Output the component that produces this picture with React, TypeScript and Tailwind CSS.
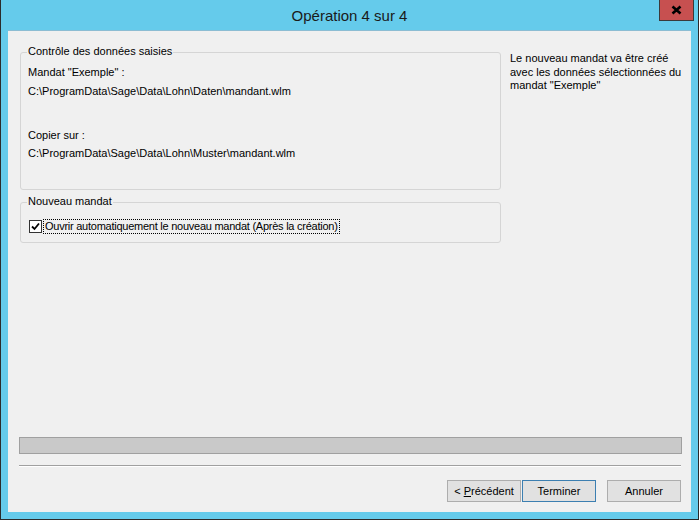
import React from "react";

const font = { fontFamily: '"Liberation Sans", Arial, sans-serif' };

function GroupBox({ label, className, children }: { label: string; className: string; children: React.ReactNode }) {
  return (
    <div className={`relative rounded-[3px] border border-[#d5d5d5] ${className}`}>
      <span className="absolute -top-[8px] left-[6px] bg-[#f0f0f0] px-[1px] leading-[13px]">{label}</span>
      {children}
    </div>
  );
}

function Button({ children, focused }: { children: React.ReactNode; focused?: boolean }) {
  return (
    <button
      className={`h-[22px] w-[74px] bg-[#e1e1e1] text-[11px] leading-[13px] text-black ${focused ? "border border-[#3c7fb1]" : "border border-[#adadad]"}`}
    >
      {children}
    </button>
  );
}

export default function App() {
  return (
    <div className="flex h-[520px] w-[699px] flex-col border-x border-b border-[#2b2b2b] bg-[#65cbeb] text-[11px] text-black" style={font}>
      {/* Title bar */}
      <div className="relative flex h-[30px] shrink-0 items-center justify-center">
        <span className="pt-[2px] text-[15px] text-[#1a1a1a]">Opération 4 sur 4</span>
        <div className="absolute right-[4px] top-0 flex h-[21px] w-[35px] items-center justify-center border border-t-0 border-[#3a3a3a] bg-[#c75050]">
          <svg width="11" height="10" viewBox="0 0 11 10">
            <path d="M1.5 1.5 L9.5 8.5 M9.5 1.5 L1.5 8.5" stroke="#000" strokeWidth="2.6" />
          </svg>
        </div>
      </div>

      {/* Content */}
      <div className="mx-[7px] mb-[7px] flex flex-1 flex-col border-t border-[#8cbdd3] bg-[#f0f0f0]">
        <div className="mt-[21px] flex">
          <div className="ml-[12px] w-[481px]">
            <GroupBox label="Contrôle des données saisies" className="h-[138px] pl-[7px] pt-[13px]">
              <p className="leading-[13px]">Mandat "Exemple" :</p>
              <p className="mt-[6px] leading-[13px]">C:\ProgramData\Sage\Data\Lohn\Daten\mandant.wlm</p>
              <p className="mt-[31px] leading-[13px]">Copier sur :</p>
              <p className="mt-[5px] leading-[13px]">C:\ProgramData\Sage\Data\Lohn\Muster\mandant.wlm</p>
            </GroupBox>
            <GroupBox label="Nouveau mandat" className="mt-[12px] h-[41px] pl-[8px] pt-[16px]">
              <div className="flex items-start">
                <span className="mt-[1px] flex h-[13px] w-[13px] items-center justify-center border border-[#333] bg-white">
                  <svg width="9" height="9" viewBox="0 0 9 9">
                    <path d="M1 4.5 L3.5 7 L8 1.5" fill="none" stroke="#000" strokeWidth="1.8" />
                  </svg>
                </span>
                <span className="ml-[1px] border border-dotted border-[#000] px-[1px] leading-[13px] tracking-[-0.25px]">
                  Ouvrir automatiquement le nouveau mandat (Après la création)
                </span>
              </div>
            </GroupBox>
          </div>
          <p className="ml-[9px] leading-[13.5px]">
            Le nouveau mandat va être créé
            <br />
            avec les données sélectionnées du
            <br />
            mandat "Exemple"
          </p>
        </div>

        {/* Bottom section */}
        <div className="mt-auto">
          <div className="ml-[11px] h-[17px] w-[663px] border border-[#a0a0a0] bg-[#c9c9c9]" />
          <div className="ml-[11px] mt-[11px] h-[2px] w-[662px] border-b border-t border-b-white border-t-[#a0a0a0]" />
          <div className="mb-[10px] mr-[10px] mt-[13px] flex justify-end">
            <Button>
              &lt; <span className="underline">P</span>récédent
            </Button>
            <div className="ml-[1px]">
              <Button focused>Terminer</Button>
            </div>
            <div className="ml-[11px]">
              <Button>Annuler</Button>
            </div>
          </div>
        </div>
      </div>
    </div>
  );
}
